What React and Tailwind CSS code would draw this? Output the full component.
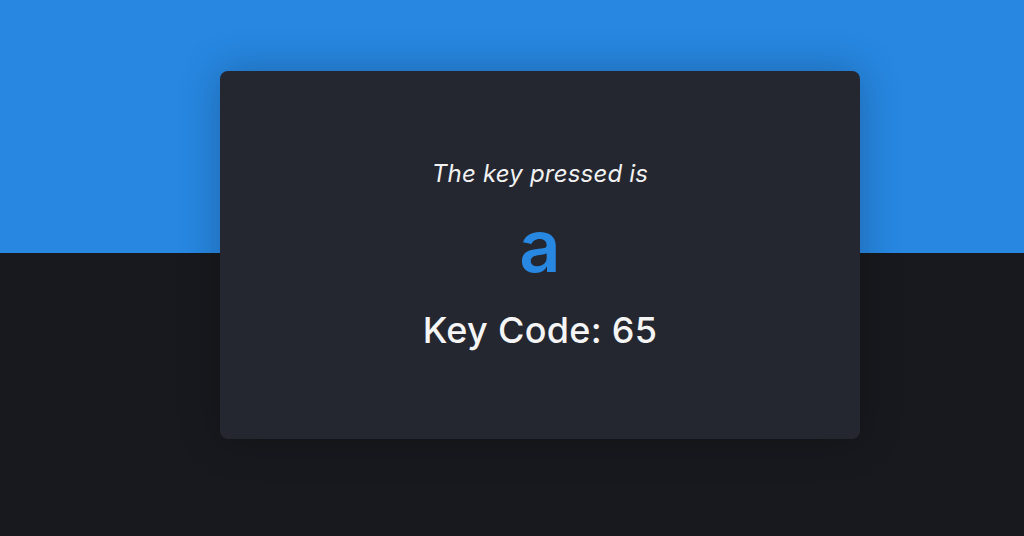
export default function App() {
  return (
    <div className="flex h-[536px] w-full items-center justify-center bg-[linear-gradient(to_bottom,#2787e1_253px,#17191e_253px)] pb-[26px] pl-[56px] font-['Inter','Noto_Sans',sans-serif]">
      <div className="flex h-[368px] w-[640px] flex-col items-center justify-center rounded-lg bg-[#242730] shadow-[0_0_40px_rgba(0,0,0,0.25)]">
        <p className="text-[24px] italic leading-none tracking-[0.2px] text-[#f2f2f2]">The key pressed is</p>
        <p className="mt-[24px] text-[72px] font-semibold leading-none text-[#2787e1]">a</p>
        <p className="mt-[30px] text-[36px] font-medium leading-none tracking-[0.3px] text-[#f5f5f5]">Key Code: 65</p>
      </div>
    </div>
  );
}
